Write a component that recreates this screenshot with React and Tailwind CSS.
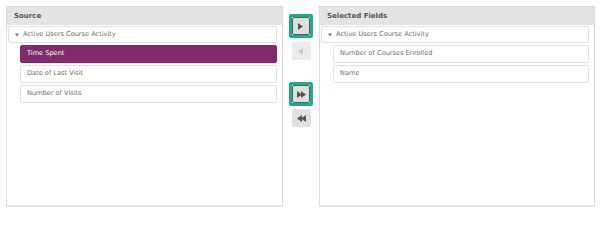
import { useState } from 'react'

// Two-list field picker: source tree on the left, chosen fields on the right,
// move buttons in between.

const source = {
  group: 'Active Users Course Activity',
  items: ['Time Spent', 'Date of Last Visit', 'Number of Visits'],
}

const selected = {
  group: 'Active Users Course Activity',
  items: ['Number of Courses Enrolled', 'Name'],
}

function Caret() {
  return (
    <svg width="4" height="4" viewBox="0 0 4 4" className="shrink-0">
      <path d="M0 0.5h4L2 3.5z" fill="#777" />
    </svg>
  )
}

function Arrow({ dir = 'right', double = false, color }) {
  const one = dir === 'right' ? 'M0 0L5 3.5L0 7z' : 'M5 0L0 3.5L5 7z'
  const two = dir === 'right' ? 'M4 0L9 3.5L4 7z' : 'M9 0L4 3.5L9 7z'
  return (
    <svg width={double ? 9 : 6} height="7" viewBox={double ? '0 0 9 7' : '0 0 6 7'}>
      <path d={one} fill={color} />
      {double && <path d={two} fill={color} />}
    </svg>
  )
}

function Panel({ title, tree, active, onPick }) {
  return (
    <div className="flex flex-col h-[201px] border border-[#dcdcdc] border-b-2 border-b-[#e6e6e6] bg-white">
      <div className="h-[18px] flex items-center px-[7px] bg-[#e4e4e4] text-[7px] font-bold text-[#555]">
        {title}
      </div>
      <div className="pl-[1px] pr-[5px] pt-[1px] flex flex-col gap-[2px]">
        <div className="h-[17px] flex items-center gap-[4px] pl-[6px] border border-[#e2e2e2] rounded-[2px] text-[6.6px] text-[#6c6c6c]">
          <Caret />
          <span>{tree.group}</span>
        </div>
        {tree.items.map(name => (
          <button
            key={name}
            type="button"
            onClick={() => onPick?.(name)}
            className={`ml-[12px] h-[18px] flex items-center px-[6px] rounded-[2px] border text-left text-[6.6px] ${
              active === name
                ? 'bg-[#802a6b] border-[#802a6b] text-white'
                : 'bg-white border-[#e2e2e2] text-[#6c6c6c]'
            }`}
          >
            {name}
          </button>
        ))}
      </div>
    </div>
  )
}

function MoveButton({ children, ring, disabled }) {
  const inner = (
    <button
      type="button"
      disabled={disabled}
      className={`flex items-center justify-center rounded-[2px] ${
        ring
          ? 'w-[18px] h-[18px] border border-[#5a5a5a] bg-[#dedede]'
          : disabled
            ? 'w-[19px] h-[18px] bg-[#ebebeb]'
            : 'w-[19px] h-[18px] bg-[#e1e1e1]'
      }`}
    >
      {children}
    </button>
  )
  if (!ring) return inner
  return (
    <div className="p-0 border-[3px] border-[#1daa8e] rounded-[2px]">{inner}</div>
  )
}

export default function App() {
  const [active, setActive] = useState('Time Spent')

  return (
    <div
      className="w-[600px] h-[212px] bg-white flex pl-[6px] pt-[6px] pr-[5px]"
      style={{ fontFamily: '"DejaVu Sans", Verdana, sans-serif' }}
    >
      <div className="w-[277px]">
        <Panel title="Source" tree={source} active={active} onPick={setActive} />
      </div>

      <div className="w-[36px] flex flex-col items-center pt-[8px]">
        <MoveButton ring><Arrow color="#555" /></MoveButton>
        <div className="mt-[4px]">
          <MoveButton disabled><Arrow dir="left" color="#c9c9c9" /></MoveButton>
        </div>
        <div className="mt-[22px]">
          <MoveButton ring><Arrow double color="#555" /></MoveButton>
        </div>
        <div className="mt-[3px]">
          <MoveButton><Arrow dir="left" double color="#555" /></MoveButton>
        </div>
      </div>

      <div className="w-[276px]">
        <Panel title="Selected Fields" tree={selected} />
      </div>
    </div>
  )
}
